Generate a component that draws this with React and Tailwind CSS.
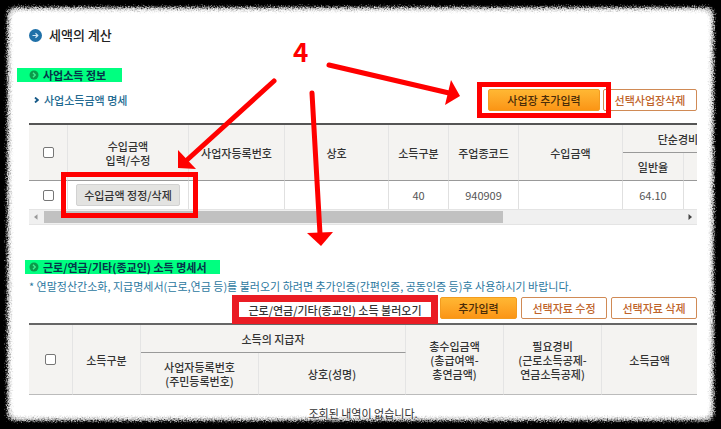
import React from "react";

const th = "border-r border-[#e4e4e4] p-0 font-medium";
const td = "border-r border-[#e0e0e0] p-0";
const outlineBtn =
  "h-[22px] rounded-xs border border-[#d08a55] bg-white text-[#bf642a] font-medium whitespace-nowrap";
const orangeBtn =
  "h-[22px] rounded-xs border border-[#f39c1f] bg-linear-to-b from-[#ffb733] to-[#fb9514] text-[#4a2c08] font-medium whitespace-nowrap";

function Paper() {
  return (
    <div className="absolute inset-0" aria-hidden="true">
      <svg className="absolute size-0">
        <filter id="rough" x="-5%" y="-5%" width="110%" height="110%">
          <feTurbulence type="fractalNoise" baseFrequency="0.7" numOctaves="2" seed="4" result="n" />
          <feGaussianBlur in="SourceGraphic" stdDeviation="0.8" result="b" />
          <feDisplacementMap in="b" in2="n" scale="7" xChannelSelector="R" yChannelSelector="G" />
        </filter>
      </svg>
      <div className="h-full w-full pt-[7px] pr-[7px] pb-[8px] pl-[7px] [filter:url(#rough)]">
        <div className="h-full w-full rounded-lg bg-[#b4b4b4] p-[2px]">
          <div className="h-full w-full rounded-lg bg-[#dcdcdc] p-[2px]">
            <div className="h-full w-full rounded-lg bg-white" />
          </div>
        </div>
      </div>
      <div className="absolute inset-[14px] bg-white" />
    </div>
  );
}

function Bullet() {
  return (
    <svg width="10" height="10" viewBox="0 0 10 10" className="shrink-0" aria-hidden="true">
      <circle cx="5" cy="5" r="4.5" fill="#0b9a4a" />
      <path d="M4 2.8 6.2 5 4 7.2" fill="none" stroke="#3df08f" strokeWidth="1.4" />
    </svg>
  );
}

function Arrows() {
  return (
    <svg className="pointer-events-none absolute top-0 left-0" width="480" height="260" aria-hidden="true">
      <g stroke="#ff0000" strokeWidth="5" strokeLinecap="round">
        <path d="M274 81 187 160" />
        <path d="M329 65 449 93" />
        <path d="M312 93 320 234" />
      </g>
      <g fill="#ff0000">
        <path d="M178 150 196 169 178 168Z" />
        <path d="M451 80 460 96 445 105Z" />
        <path d="M307 233 333 232 321 246Z" />
      </g>
    </svg>
  );
}

function Check({ label }) {
  return (
    <input
      type="checkbox"
      aria-label={label}
      className="mx-auto block size-[11px] appearance-none rounded-xs border border-[#767676] bg-white checked:bg-[#1b6ea8]"
    />
  );
}

export default function App() {
  return (
    <div className="relative min-h-screen overflow-hidden bg-black font-['Noto_Sans_CJK_KR',sans-serif] text-[11px] leading-[14px] text-[#333]">
      <Paper />
      <main className="relative pt-[26px] pr-6 pl-[29px]">
        <h1 className="flex h-[18px] items-center gap-[7px] text-[13px] font-medium text-[#222]">
          <svg width="13" height="13" viewBox="0 0 13 13" aria-hidden="true">
            <circle cx="6.5" cy="6.5" r="6.5" fill="#1f70a8" />
            <path d="M3.5 6.5h5M6.5 4.3l2.3 2.2-2.3 2.2" fill="none" stroke="#cfe6f5" strokeWidth="1.2" />
          </svg>
          세액의 계산
        </h1>

        <section className="mt-6">
          <h2 className="-ml-3 flex h-[14px] w-[105px] items-center gap-1 bg-[#00ff80] pl-3 font-bold text-[#06344a]">
            <Bullet />
            사업소득 정보
          </h2>
          <div className="mt-[7px] flex h-[22px] items-center justify-between">
            <h3 className="flex items-center gap-[5px] pl-[5px] font-medium text-[#236a91]">
              <svg width="5" height="6" viewBox="0 0 5 6" aria-hidden="true">
                <path d="M1 .5 3.8 3 1 5.5" fill="none" stroke="#175a88" strokeWidth="1.8" />
              </svg>
              사업소득금액 명세
            </h3>
            <div className="flex gap-[3px]">
              <div className="relative">
                <button type="button" className={orangeBtn + " w-28"}>사업장 추가입력</button>
                <span className="pointer-events-none absolute -inset-x-[11px] -inset-y-[7px] z-10 border-[5px] border-[#ff0000]" />
              </div>
              <button type="button" className={outlineBtn + " w-[94px]"}>선택사업장삭제</button>
            </div>
          </div>

          <div className="mt-3 overflow-x-clip border-t-2 border-[#555]">
            <table className="w-[744px] table-fixed border-separate border-spacing-0 text-center">
              <colgroup>
                <col className="w-[39px]" />
                <col className="w-[121px]" />
                <col className="w-24" />
                <col className="w-[104px]" />
                <col className="w-[60px]" />
                <col className="w-[70px]" />
                <col className="w-[104px]" />
                <col className="w-[61px]" />
                <col />
              </colgroup>
              <thead className="bg-[#f4f3f1]">
                <tr className="h-7">
                  <th rowSpan="2" className={th + " border-b border-b-[#999]"}><Check label="전체 선택" /></th>
                  <th rowSpan="2" className={th + " border-b border-b-[#999]"}>수입금액<br />입력/수정</th>
                  <th rowSpan="2" className={th + " border-b border-b-[#999]"}>사업자등록번호</th>
                  <th rowSpan="2" className={th + " border-b border-b-[#999]"}>상호</th>
                  <th rowSpan="2" className={th + " border-b border-b-[#999]"}>소득구분</th>
                  <th rowSpan="2" className={th + " border-b border-b-[#999]"}>주업종코드</th>
                  <th rowSpan="2" className={th + " border-b border-b-[#999]"}>수입금액</th>
                  <th colSpan="2" className={th + " border-b border-b-[#999] pr-[39px] whitespace-nowrap"}>단순경비</th>
                </tr>
                <tr className="h-7">
                  <th className={th + " border-b border-b-[#999]"}>일반율</th>
                  <th className={th + " border-b border-b-[#999]"} />
                </tr>
              </thead>
              <tbody className="text-[#555]">
                <tr className="h-7">
                  <td className={td}><Check label="사업장 선택" /></td>
                  <td className={td}>
                    <div className="relative z-10 mx-auto h-[22px] w-[104px]">
                      <button type="button" className="block h-full w-full rounded-xs border border-[#d2d2d2] bg-[#e3e3e1] font-medium whitespace-nowrap text-[#333]">
                        수입금액 정정/삭제
                      </button>
                      <span className="pointer-events-none absolute -inset-y-3 -right-[18px] -left-[15px] border-[5px] border-[#ff0000]" />
                    </div>
                  </td>
                  <td className={td} />
                  <td className={td} />
                  <td className={td}>40</td>
                  <td className={td}>940909</td>
                  <td className={td} />
                  <td className={td}>64.10</td>
                  <td className={td} />
                </tr>
              </tbody>
            </table>
          </div>
          <div className="flex h-4 items-center border-y border-[#e4e4e4] bg-[#f0f0f0]">
            <svg width="15" height="12" viewBox="0 0 15 12" className="shrink-0" aria-hidden="true">
              <path d="M8.500 3.200v5.600L5 6Z" fill="#999" />
            </svg>
            <div className="flex-1">
              <div className="h-3 w-[72%] bg-[#c1c1c1]" />
            </div>
            <svg width="15" height="12" viewBox="0 0 15 12" className="shrink-0" aria-hidden="true">
              <path d="M6.500 3v6L10 6Z" fill="#444" />
            </svg>
          </div>
        </section>

        <section className="mt-[35px]">
          <h2 className="-ml-1 flex h-[14px] w-[195px] items-center gap-1 bg-[#00ff80] pl-1 font-bold whitespace-nowrap text-[#06344a]">
            <Bullet />
            근로/연금/기타(종교인) 소득 명세서
          </h2>
          <p className="mt-[5px] whitespace-nowrap text-[#2c78a0]">
            * 연말정산간소화, 지급명세서(근로,연금 등)를 불러오기 하려면 추가인증(간편인증, 공동인증 등)후 사용하시기 바랍니다.
          </p>
          <div className="mt-[2px] flex h-7 items-start justify-end">
            <button type="button" className="mr-[2px] h-[29px] w-[206px] border-[7px] border-[#ea1c24] bg-white font-medium whitespace-nowrap">
              <span className="flex h-full items-center justify-center">근로/연금/기타(종교인) 소득 불러오기</span>
            </button>
            <div className="flex gap-1 pt-[2px]">
              <button type="button" className={orangeBtn + " w-[77px]"}>추가입력</button>
              <button type="button" className={outlineBtn + " w-[86px]"}>선택자료 수정</button>
              <button type="button" className={outlineBtn + " w-[86px]"}>선택자료 삭제</button>
            </div>
          </div>
          <table className="w-full table-fixed border-separate border-spacing-0 border-t-2 border-[#666] text-center">
            <colgroup>
              <col className="w-11" />
              <col className="w-[68px]" />
              <col className="w-[118px]" />
              <col className="w-[147px]" />
              <col className="w-[98px]" />
              <col className="w-[98px]" />
              <col />
            </colgroup>
            <thead className="bg-[#f4f3f1]">
              <tr className="h-7">
                <th rowSpan="2" className={th + " border-b border-b-[#bbb]"}><Check label="전체 선택" /></th>
                <th rowSpan="2" className={th + " border-b border-b-[#bbb]"}>소득구분</th>
                <th colSpan="2" className={th + " border-b border-b-[#999]"}>소득의 지급자</th>
                <th rowSpan="2" className={th + " border-b border-b-[#bbb]"}>총수입금액<br />(총급여액-<br />총연금액)</th>
                <th rowSpan="2" className={th + " border-b border-b-[#bbb]"}>필요경비<br />(근로소득공제-<br />연금소득공제)</th>
                <th rowSpan="2" className="border-b border-[#bbb] p-0 font-medium">소득금액</th>
              </tr>
              <tr className="h-[42px]">
                <th className={th + " border-b border-b-[#bbb]"}>사업자등록번호<br />(주민등록번호)</th>
                <th className={th + " border-b border-b-[#bbb]"}>상호(성명)</th>
              </tr>
            </thead>
            <tbody>
              <tr>
                <td colSpan="7" className="px-0 pt-[11px] pb-0">조회된 내역이 없습니다.</td>
              </tr>
            </tbody>
          </table>
        </section>
      </main>

      <Arrows />
      <span className="absolute top-9 left-[293px] text-[26px] leading-[30px] font-bold text-[#ff0000]">4</span>
    </div>
  );
}
